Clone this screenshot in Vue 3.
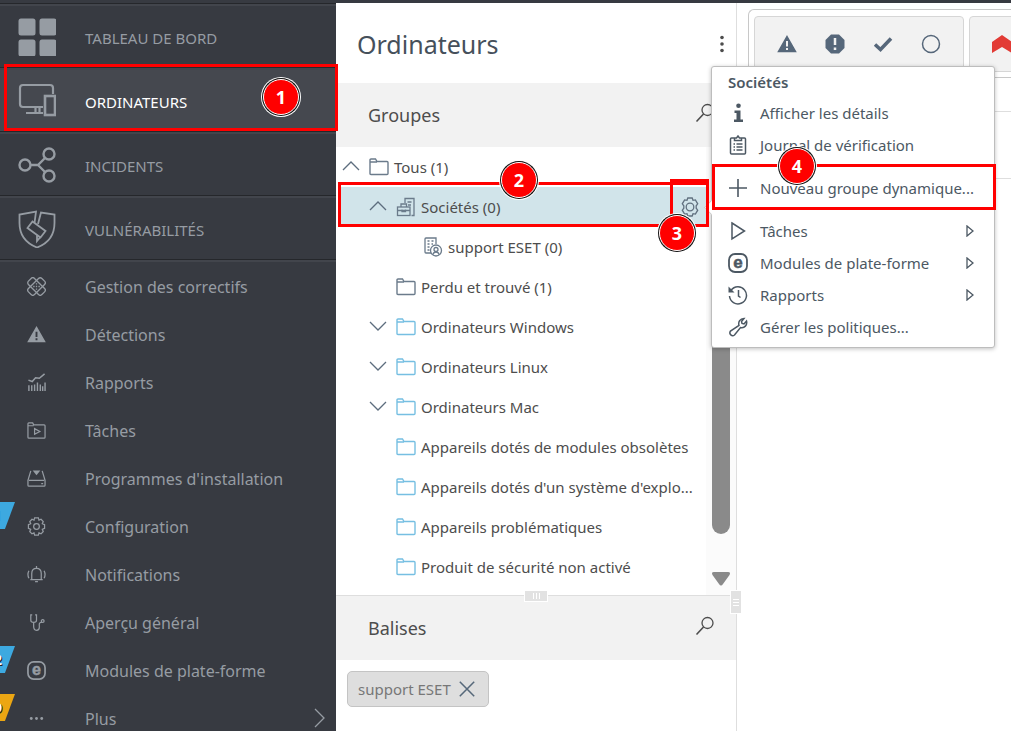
<script setup>
import { h, ref } from "vue";

// every icon is drawn in a 20x20 box, the big menu ones in 38x38
const icons = {
  dashboard: '<g fill="currentColor" stroke="none"><rect x="0.5" y="0.5" width="17" height="17" rx="2.5"/><rect x="21.5" y="0.5" width="17" height="17" rx="2.5"/><rect x="0.5" y="21.5" width="17" height="17" rx="2.5"/><rect x="21.5" y="21.5" width="17" height="17" rx="2.5"/></g>',
  computers: '<g stroke-width="2.2"><path d="M25 25H5a3 3 0 0 1-3-3V6a3 3 0 0 1 3-3h27a3 3 0 0 1 3 3v6"/><rect x="27" y="14" width="10" height="19" stroke-width="2.6"/><path d="M17.500 25v5M21.500 25v5M8 31h17"/></g>',
  incidents: '<g stroke-width="2.4"><circle cx="7" cy="19" r="5.5"/><circle cx="31" cy="8" r="5.5"/><circle cx="31" cy="30" r="5.5"/><path d="M13 19h7L27 12M20 19l7 7"/></g>',
  shield: '<g stroke-width="1.8"><path d="M16.500 13L18 1.500 1.500 4.500v8.500c0 11 6 20 17.500 24.500C31 33 36.500 24 36.500 13V4.500L23 2.500l-3 11.500"/><path d="M14.500 11.500L27.500 21l-5 6.500L9.500 18zM19 25v6l3-3.500"/></g>',
  patch: '<g stroke-width="1.4"><rect x="5.500" y="0" width="9" height="20" rx="2.500" transform="rotate(45 10 10)"/><rect x="5.500" y="0" width="9" height="20" rx="2.500" transform="rotate(-45 10 10)"/><path d="M6.500 10h1.500M12 10h1.500M10 6.500v1.500M10 12v1.500M9.300 10h1.400"/></g>',
  warning: '<path d="M10 2.500L18.500 17.500H1.500z" fill="currentColor" stroke="currentColor" stroke-width="1.500"/><path d="M10 7v5.500M10 14v2" stroke="var(--hole)" stroke-width="2"/>',
  report: '<path d="M1.500 7.500l4 1.500L9 5l4 .5L18.500 1" stroke-width="1.600"/><path d="M2 13v6M5 13v6M8 12v7M11 10v9M14 12v7M16.500 14v5M19 10v9" stroke-width="1.500"/>',
  taskFolder: '<path d="M1 17V3q0-1 1-1h4l1 2h11q1 0 1 1v12q0 1-1 1H2q-1 0-1-1zM1 5h6M8 8v6l5.500-3z"/>',
  installer: '<path d="M4 2L1 12v5q0 1 1 1h16q1 0 1-1v-5L16 2M2 12h16M15 15.500h2"/><path d="M6 1.500h8L10 6.500z" fill="currentColor" stroke="none"/>',
  gear: '<path d="M8 1h4l.6 2.300 2.200-.9 2.300 2.400-1 2.200L18.500 8v4l-2.400 1 1 2.300-2.300 2.400-2.200-1L12 19H8l-.6-2.300-2.200 1-2.300-2.400 1-2.300-2.400-1V8l2.400-1-1-2.200L5.200 2.400l2.200.9z"/><circle cx="10" cy="10" r="3"/>',
  hexGear: '<path d="M7.800 1h4.400l.8 2.300 2.400-.4 2.300 3.900L16.200 8.800v2.400l1.500 2-2.300 3.900-2.400-.4-.8 2.300H7.800L7 16.700l-2.400.4-2.300-3.900 1.500-2V8.800L2.300 6.800l2.300-3.900 2.400.4z"/><circle cx="10" cy="10" r="3.800"/>',
  bell: '<path d="M3.500 15.500h13M5 15.500V9c0-3.500 2-5.500 5-5.500s5 2 5 5.500v6.500M10 1v2M8.500 17.500h3M2 6q-2 4 0 8M18 6q2 4 0 8"/>',
  stethoscope: '<path d="M5.500 2H4v5.500c0 3 6 3 6 0V2H8.500M7 10v4c0 6 6 5 6 1 0-3-1-5 3-5.500"/><circle cx="16.500" cy="8.500" r="1.500"/>',
  eset: '<rect x="1" y="1" width="18" height="18" rx="6" stroke-width="1.800"/><text x="10" y="15" text-anchor="middle" font-family="Liberation Sans, Arial, sans-serif" font-weight="bold" font-size="17" fill="currentColor" stroke="currentColor" stroke-width="0.5">e</text>',
  more: '<g fill="currentColor" stroke="none"><circle cx="4.500" cy="10" r="1.500"/><circle cx="10" cy="10" r="1.500"/><circle cx="15.500" cy="10" r="1.500"/></g>',
  kebab: '<g fill="currentColor" stroke="none"><circle cx="10" cy="3.500" r="1.800"/><circle cx="10" cy="10" r="1.800"/><circle cx="10" cy="16.500" r="1.800"/></g>',
  chevronRight: '<path d="M5 1l9 9-9 9"/>',
  chevronUp: '<path d="M2 14l8-8 8 8"/>',
  chevronDown: '<path d="M2 6l8 8 8-8"/>',
  folder: '<path d="M1 16.500V3q0-1 1-1h4.500l1.500 2.500h10q1 0 1 1v11q0 1-1 1H2q-1 0-1-1zM1 5h7" stroke-width="1.400"/>',
  company: '<path d="M9 6V1.500h9v17h-2.500M11.500 5h4M12 8h3" /><rect x="1.500" y="10" width="12.500" height="8.500"/><path d="M5 10V7h5.500v3M1.500 13.500h12.500M6 12.500v2h3.500v-2"/>',
  site: '<path d="M8 16H3q-1 0-1-1V2q0-1 1-1h10v6"/><path d="M4.500 4h2M8.500 4h2M4.500 7h2M8.500 7h1.500M4.500 10h2M4.500 13h2" stroke-width="1.500"/><circle cx="13" cy="13.500" r="5.500"/><path d="M10 17.500q.5-2.500 3-2.500t3 2.500"/><circle cx="13" cy="12.500" r="2"/>',
  search: '<circle cx="12.500" cy="7" r="5.500"/><path d="M8.500 11L1.500 18.500" stroke-width="1.600"/>',
  info: '<g fill="currentColor" stroke="none"><circle cx="10.500" cy="2.800" r="2.300"/><path d="M6.500 7.500h6v9h2.500v2.500H6v-2.500h2.500V10h-2z"/></g>',
  journal: '<path d="M6 3H3.500q-1 0-1 1v14q0 1 1 1h13q1 0 1-1V4q0-1-1-1H14M6.500 3v2.500h7V3h-2l-1.500-2L8.500 3z" stroke-width="1.500"/><path d="M5.500 9h1.500M8.500 9h6M5.500 12h1.500M8.500 12h6M5.500 15h1.500M8.500 15h6" stroke-width="1.500"/>',
  plus: '<path d="M10 1v18M1 10h18" stroke-width="1.600"/>',
  play: '<path d="M4 2l12.500 8L4 18z" stroke-width="1.500"/>',
  history: '<path d="M3 5.500A8.500 8.500 0 1 1 1.500 11M10.500 5v6l2 1.500" stroke-width="1.500"/><path d="M.5 1.500v6h6z" fill="currentColor" stroke="none"/>',
  wrench: '<path d="M11 8.500C10 5 12 1.500 16 1.500L13.500 4.500l.5 2 2 .5 2.500-3c1 4-2 7.500-6 6.500l-6 7.500c-2.500 2-6-1-4-4z" stroke-width="1.500"/>',
  octagon: '<path d="M6 .5h8L19.500 6v8L14 19.500H6L.5 14V6z" fill="currentColor" stroke="none"/><path d="M10 4v7M10 13.500v2.500" stroke="var(--hole)" stroke-width="2.500"/>',
  check: '<path d="M2 10.500l5.500 5L18 4.500" stroke-width="3.500"/>',
  circle: '<circle cx="10" cy="10" r="8.500" stroke-width="1.500"/>',
  close: '<path d="M2 2l16 16M18 2L2 18" stroke-width="1.700"/>',
};

const Icon = ({ name, size = 20, box = 20 }) =>
  h("svg", {
    class: "icon",
    width: size,
    height: size,
    viewBox: `0 0 ${box} ${box}`,
    "aria-hidden": "true",
    innerHTML: icons[name],
  });
Icon.props = ["name", "size", "box"];

const mainLinks = [
  { icon: "dashboard", label: "TABLEAU DE BORD" },
  { icon: "computers", label: "ORDINATEURS" },
  { icon: "incidents", label: "INCIDENTS" },
  { icon: "shield", label: "VULNÉRABILITÉS" },
];
const current = ref("ORDINATEURS");

const subLinks = [
  { icon: "patch", label: "Gestion des correctifs" },
  { icon: "warning", label: "Détections" },
  { icon: "report", label: "Rapports" },
  { icon: "taskFolder", label: "Tâches" },
  { icon: "installer", label: "Programmes d'installation" },
  { icon: "gear", label: "Configuration", flag: "1", tone: "navy" },
  { icon: "bell", label: "Notifications" },
  { icon: "stethoscope", label: "Aperçu général" },
  { icon: "eset", label: "Modules de plate-forme", flag: "2", tone: "blue" },
  { icon: "more", label: "Plus", flag: "9", tone: "orange", arrow: true },
];

const groups = [
  { level: 0, toggle: "chevronUp", icon: "folder", label: "Tous (1)" },
  { level: 1, toggle: "chevronUp", icon: "company", label: "Sociétés (0)", selected: true },
  { level: 2, icon: "site", label: "support ESET (0)" },
  { level: 1, icon: "folder", label: "Perdu et trouvé (1)" },
  { level: 1, toggle: "chevronDown", icon: "folder", label: "Ordinateurs Windows", dynamic: true },
  { level: 1, toggle: "chevronDown", icon: "folder", label: "Ordinateurs Linux", dynamic: true },
  { level: 1, toggle: "chevronDown", icon: "folder", label: "Ordinateurs Mac", dynamic: true },
  { level: 1, icon: "folder", label: "Appareils dotés de modules obsolètes", dynamic: true },
  { level: 1, icon: "folder", label: "Appareils dotés d'un système d'explo...", dynamic: true },
  { level: 1, icon: "folder", label: "Appareils problématiques", dynamic: true },
  { level: 1, icon: "folder", label: "Produit de sécurité non activé", dynamic: true },
];

const menu = [
  [
    { icon: "info", label: "Afficher les détails" },
    { icon: "journal", label: "Journal de vérification" },
  ],
  [{ icon: "plus", label: "Nouveau groupe dynamique..." }],
  [
    { icon: "play", label: "Tâches", sub: true },
    { icon: "eset", label: "Modules de plate-forme", sub: true },
    { icon: "history", label: "Rapports", sub: true },
    { icon: "wrench", label: "Gérer les politiques..." },
  ],
];
</script>

<template>
  <div class="page">
    <div class="topbar"></div>
    <div class="body">
      <nav class="sidebar">
        <a
          v-for="link in mainLinks"
          :key="link.label"
          href="#"
          class="main-link"
          :class="{ active: link.label === current }"
          @click.prevent="current = link.label"
        >
          <Icon :name="link.icon" :size="38" :box="38" />
          <span>{{ link.label }}</span>
        </a>
        <div class="sub-links">
          <a v-for="link in subLinks" :key="link.label" href="#" class="sub-link">
            <span v-if="link.flag" class="flag" :class="link.tone">{{ link.flag }}</span>
            <Icon :name="link.icon" :size="19" />
            <span>{{ link.label }}</span>
            <Icon v-if="link.arrow" name="chevronRight" class="more-arrow" />
          </a>
        </div>
      </nav>

      <section class="groups">
        <header class="title-row">
          <h1>Ordinateurs</h1>
          <button class="plain" aria-label="Options"><Icon name="kebab" /></button>
        </header>
        <header class="section-row">
          <h2>Groupes</h2>
          <button class="plain" aria-label="Rechercher un groupe"><Icon name="search" /></button>
        </header>
        <div class="tree-wrap">
          <ul class="tree">
            <li
              v-for="group in groups"
              :key="group.label"
              class="tree-row"
              :class="['level' + group.level, { selected: group.selected, dynamic: group.dynamic }]"
            >
              <button v-if="group.toggle" class="plain toggle" :aria-label="group.label">
                <Icon :name="group.toggle" />
              </button>
              <span v-else class="toggle"></span>
              <Icon :name="group.icon" class="kind" />
              <span class="name">{{ group.label }}</span>
              <button v-if="group.selected" class="plain cog" aria-label="Actions"><Icon name="hexGear" /></button>
            </li>
          </ul>
          <div class="scrollbar">
            <div class="thumb"></div>
            <svg width="18" height="14" viewBox="0 0 18 14"><path d="M2 0h14q3 0 1.500 3L11 12q-2 3-4 0L.5 3Q-1 0 2 0z" fill="#8a8a8a" /></svg>
          </div>
          <span class="grip grip-h"></span>
        </div>
        <header class="section-row tags-head">
          <h2>Balises</h2>
          <button class="plain" aria-label="Rechercher une balise"><Icon name="search" /></button>
          <span class="grip grip-v"></span>
        </header>
        <div class="tags">
          <button class="tag">support ESET <Icon name="close" :size="18" /></button>
        </div>
      </section>

      <main class="content">
        <div class="filters">
          <div class="filter-group">
            <button class="plain" aria-label="Avertissement"><Icon name="warning" /></button>
            <button class="plain" aria-label="Erreur"><Icon name="octagon" /></button>
            <button class="plain" aria-label="OK"><Icon name="check" /></button>
            <button class="plain" aria-label="Inconnu"><Icon name="circle" /></button>
          </div>
          <div class="filter-group">
            <button class="plain" aria-label="Critique">
              <svg width="20" height="20" viewBox="0 0 20 20"><path d="M0 8L10 1l10 7v11l-10-6-10 6z" fill="#e23b35" /></svg>
            </button>
          </div>
        </div>
        <div class="table-head"></div>
        <div class="table-line"></div>
      </main>
    </div>

    <div class="menu">
      <h3>Sociétés</h3>
      <div v-for="(part, i) in menu" :key="i" class="menu-part">
        <button v-for="item in part" :key="item.label" class="menu-item">
          <Icon :name="item.icon" />
          <span>{{ item.label }}</span>
          <svg v-if="item.sub" class="icon sub-arrow" width="8" height="12" viewBox="0 0 8 12"><path d="M1 1l6 5-6 5z" /></svg>
        </button>
      </div>
    </div>

    <div class="mark mark1"></div>
    <div class="mark mark2"></div>
    <div class="mark mark3"></div>
    <div class="mark mark4"></div>
    <span class="step step1">1</span>
    <span class="step step2">2</span>
    <span class="step step3">3</span>
    <span class="step step4">4</span>
  </div>
</template>

<style>
body {
  margin: 0;
  background: #fff;
}
</style>

<style scoped>
* {
  box-sizing: border-box;
}
.page {
  position: relative;
  height: 100vh;
  overflow: hidden;
  display: flex;
  flex-direction: column;
  font-family: "Noto Sans", "Open Sans", sans-serif;
  font-size: 15px;
  color: #4d4d4d;
}
.topbar {
  height: 3px;
  flex: none;
  background: #373a41;
}
.body {
  flex: 1;
  min-height: 0;
  display: flex;
}
.icon {
  flex: none;
  fill: none;
  stroke: currentColor;
  stroke-width: 1.3;
}
.plain {
  display: flex;
  padding: 0;
  border: 0;
  background: none;
  color: inherit;
  cursor: pointer;
}
h1, h2, h3 {
  margin: 0;
  font-weight: 400;
}

/* left navigation */
.sidebar {
  flex: none;
  width: 336px;
  background: #373a41;
  color: #969ca3;
  --hole: #373a41;
}
.sidebar a {
  color: inherit;
  text-decoration: none;
}
.main-link {
  display: flex;
  align-items: center;
  gap: 29px;
  height: 64px;
  padding: 4px 18px 0;
  border-top: 1px solid #25272b;
  box-shadow: inset 0 2px #42454c;
}
.main-link .icon,
.sub-link .icon {
  margin-bottom: 2px;
}
.sidebar .active {
  background: #45484f;
}
.active span {
  color: #fff;
}
.sub-links {
  padding-top: 3px;
  border-top: 1px solid #25272b;
  box-shadow: inset 0 2px #42454c;
}
.sub-link {
  position: relative;
  display: flex;
  align-items: center;
  gap: 39px;
  height: 48px;
  padding: 0 6px 0 27px;
  font-size: 16px;
}
.more-arrow {
  margin-left: auto;
}
.flag {
  position: absolute;
  left: 0;
  top: -1px;
  width: 15px;
  height: 27px;
  overflow: hidden;
  clip-path: polygon(0 0, 100% 0, 33% 100%, 0 100%);
  background: #3da9e0;
  color: #fff;
  font-size: 14px;
  font-weight: 700;
  line-height: 27px;
  text-indent: -6px;
  text-shadow: 1px 1px #222;
}
.navy {
  color: #173a66;
  text-shadow: none;
}
.orange {
  background: #eba613;
}

/* groups column */
.groups {
  flex: none;
  width: 401px;
  border-right: 1px solid #dedede;
}
.title-row {
  display: flex;
  align-items: center;
  justify-content: space-between;
  height: 80px;
  padding: 2px 4px 0 21px;
}
.title-row h1 {
  font-size: 25px;
  color: #46505b;
}
.section-row {
  position: relative;
  display: flex;
  align-items: center;
  justify-content: space-between;
  height: 64px;
  padding: 0 21px 0 32px;
  background: #f2f2f2;
}
.section-row h2 {
  font-size: 18px;
}
.section-row .plain {
  margin-bottom: 4px;
}
.tree-wrap {
  position: relative;
  display: flex;
}
.tree {
  flex: 1;
  min-width: 0;
  margin: 0;
  padding: 0 0 8px 4px;
  list-style: none;
}
.tree-row {
  display: flex;
  align-items: center;
  height: 40px;
  padding-left: 1px;
  white-space: nowrap;
}
.level1 {
  padding-left: 28px;
}
.level2 {
  padding-left: 55px;
}
.toggle {
  width: 22px;
  height: 22px;
  margin-right: 6px;
  color: #5d6d7e;
}
.kind {
  margin-right: 5px;
  color: #6b7b8b;
}
.dynamic .kind {
  color: #76bfe2;
}
.selected {
  background: #d1e4ea;
}
.cog {
  margin-left: auto;
  margin-right: 6px;
  color: #60707f;
}
.scrollbar {
  flex: none;
  width: 30px;
  padding: 0 6px 9px;
  display: flex;
  flex-direction: column;
  align-items: center;
  justify-content: space-between;
  background: #fbfbfb;
}
.thumb {
  width: 18px;
  height: 387px;
  border-radius: 9px;
  background: #8a8a8a;
}
.tags-head {
  border-top: 1px solid #dedede;
  height: 65px;
}
.grip {
  position: absolute;
  border: 1px solid #fff;
  z-index: 1;
}
.grip-h {
  left: 188px;
  bottom: -7px;
  width: 24px;
  height: 12px;
  background: repeating-linear-gradient(90deg, #fff 0 1px, #e2e2e2 1px 3px) center / 7px 6px no-repeat #e2e2e2;
}
.grip-v {
  right: -6px;
  top: -6px;
  width: 12px;
  height: 24px;
  background: repeating-linear-gradient(#fff 0 1px, #e2e2e2 1px 3px) center / 6px 7px no-repeat #e2e2e2;
}
.tags {
  padding: 11px;
}
.tag {
  display: flex;
  align-items: center;
  gap: 7px;
  height: 36px;
  padding: 0 12px 0 10px;
  border: 1px solid #c4c4c4;
  border-radius: 5px;
  background: #dedede;
  color: #777;
  font: inherit;
}
.tag .icon {
  color: #56687a;
}

/* right side */
.content {
  flex: 1;
  min-width: 0;
  padding-top: 6px;
}
.filters {
  display: flex;
  gap: 5px;
  height: 69px;
  margin-left: 11px;
  padding: 6px 0 5px 5px;
  border: 1px solid #c8c8c8;
  border-right: 0;
  border-radius: 6px 0 0 6px;
  overflow: hidden;
}
.filter-group {
  flex: none;
  display: flex;
  align-items: center;
  gap: 28px;
  padding: 0 22px;
  border: 1px solid #d6d6d6;
  border-radius: 4px;
  background: #f2f2f2;
  color: #56677a;
  --hole: #f2f2f2;
}
.table-head {
  height: 34px;
  border-bottom: 1px solid #dedede;
}
.table-line {
  height: 67px;
  border-bottom: 1px solid #dedede;
}

/* context menu */
.menu {
  position: absolute;
  left: 711px;
  top: 66px;
  width: 284px;
  padding-bottom: 4px;
  border: 1px solid #bdbdbd;
  border-radius: 3px;
  background: #fff;
  box-shadow: 0 1px 4px rgba(0, 0, 0, 0.25);
  color: #4c5863;
}
.menu::before {
  content: "";
  position: absolute;
  left: -6px;
  top: 135px;
  width: 10px;
  height: 10px;
  border: 1px solid #ccc;
  border-width: 0 0 1px 1px;
  background: #fff;
  transform: rotate(45deg);
}
.menu h3 {
  height: 30px;
  padding-left: 16px;
  font-size: 15px;
  font-weight: 600;
  line-height: 30px;
}
.menu-part + .menu-part::before {
  content: "";
  display: block;
  height: 1px;
  margin: 5px 16px;
  background: #dedede;
}
.menu-item {
  display: flex;
  align-items: center;
  gap: 12px;
  width: 100%;
  height: 32px;
  padding: 0 20px 0 16px;
  border: 0;
  background: none;
  color: inherit;
  font: inherit;
  cursor: pointer;
}
.sub-arrow {
  margin-left: auto;
}

/* numbered steps */
.mark {
  position: absolute;
  border: 3px solid #f00;
}
.mark1 {
  left: 4px;
  top: 64px;
  width: 334px;
  height: 67px;
}
.mark2 {
  left: 338px;
  top: 182px;
  width: 371px;
  height: 45px;
}
.mark3 {
  left: 670px;
  top: 179px;
  width: 39px;
  height: 48px;
}
.mark4 {
  left: 712px;
  top: 164px;
  width: 284px;
  height: 46px;
}
.step {
  position: absolute;
  width: 36px;
  height: 36px;
  border: 1px solid #fff;
  border-radius: 50%;
  box-shadow: 0 0 0 1px #111, 0 0 0 2px #fff;
  background: #f00;
  color: #fff;
  font: bold 18px/34px "Open Sans", sans-serif;
  text-align: center;
}
.step1 {
  left: 263px;
  top: 79px;
}
.step2 {
  left: 501px;
  top: 162px;
}
.step3 {
  left: 659px;
  top: 215px;
}
.step4 {
  left: 779px;
  top: 148px;
}
</style>
